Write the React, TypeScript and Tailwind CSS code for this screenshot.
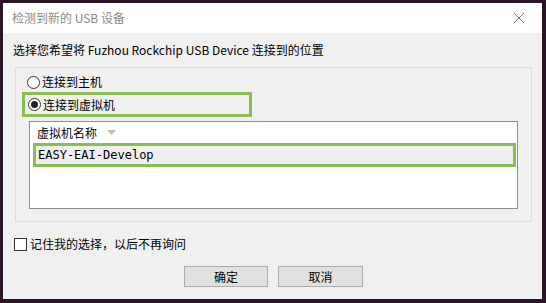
const cjk = { fontFamily: '"Noto Sans CJK SC", "Noto Sans", sans-serif' };

function Radio({ checked }: { checked?: boolean }) {
  return (
    <span className="flex h-[13px] w-[13px] items-center justify-center rounded-full border border-[#333] bg-white">
      {checked && <span className="h-[7px] w-[7px] rounded-full bg-[#222]" />}
    </span>
  );
}

export default function App() {
  return (
    <div className="h-[303px] w-[546px] bg-[#2b1426] pl-[3px] pr-[4px] pt-[3px] pb-[4px]" style={cjk}>
      <div className="flex h-full w-full flex-col">
        {/* title bar */}
        <div className="flex h-[30px] items-center justify-between bg-white pl-[9px] pr-[17px]">
          <span className="text-[12px] text-[#8a8a8a]">检测到新的 USB 设备</span>
          <svg width="12" height="12" viewBox="0 0 12 12" stroke="#777" strokeWidth="1">
            <path d="M1 1 L11 11 M11 1 L1 11" />
          </svg>
        </div>

        {/* body */}
        <div className="flex flex-1 flex-col bg-[#f0f0f0] pt-[8px]">
          <div className="pl-[10px] text-[12px] leading-[18px] text-black">
            选择您希望将 Fuzhou Rockchip USB Device 连接到的位置
          </div>

          <div className="ml-[12px] mr-[10px] mt-[8px] flex flex-col border border-[#dcdcdc] pb-[12px] pt-[4px]">
            <label className="flex h-[20px] items-center gap-[2px] pl-[11px] text-[12px] text-black">
              <Radio />
              <span>连接到主机</span>
            </label>
            <div className="ml-[6px] flex h-[25px] w-[230px] items-center gap-[2px] border-[3px] border-[#8cbd50] pl-[3px] text-[12px] text-black">
              <Radio checked />
              <span>连接到虚拟机</span>
            </div>

            <div className="mx-[13px] mt-[4px] flex h-[88px] flex-col border border-[#8f8f8f] bg-white pl-[3px] pr-[1px]">
              <div className="flex h-[21px] items-center gap-[10px] pl-[4px] text-[12px] text-black">
                <span>虚拟机名称</span>
                <svg width="9" height="5" viewBox="0 0 9 5">
                  <path d="M0 0 L9 0 L4.5 5 Z" fill="#bdbdbd" />
                </svg>
              </div>
              <div className="flex h-[24px] items-center border-[3px] border-[#8cbd50] bg-[#efefef] pl-[2px] text-[12px] text-black" style={{ fontFamily: '"DejaVu Sans Mono", "Liberation Mono", monospace' }}>
                EASY-EAI-Develop
              </div>
            </div>
          </div>

          <label className="ml-[11px] mt-[13px] flex items-center gap-[3px] text-[12px] leading-[18px] text-black">
            <span className="h-[13px] w-[13px] border border-[#333] bg-white" />
            <span>记住我的选择，以后不再询问</span>
          </label>

          <div className="mt-[13px] flex gap-[10px] pl-[181px]">
            <button className="h-[21px] w-[84px] border border-[#adadad] bg-[#e1e1e1] text-[12px] text-black">确定</button>
            <button className="h-[21px] w-[85px] border border-[#adadad] bg-[#e1e1e1] text-[12px] text-black">取消</button>
          </div>
        </div>
      </div>
    </div>
  );
}
